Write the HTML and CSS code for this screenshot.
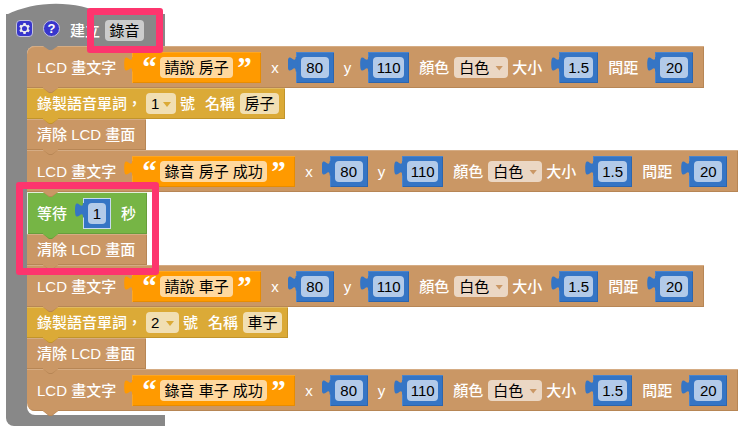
FILE: index.html
```html
<!DOCTYPE html>
<html lang="zh-Hant">
<head>
<meta charset="utf-8">
<title>錄音</title>
<link rel="stylesheet" href="styles.css">
</head>
<body>
<main class="procedure">
  <header class="head">
    <svg class="hat" viewBox="0 0 100 12" aria-hidden="true"><path d="M0 12 c30,-15 70,-15 100,0z"/></svg>
    <button class="icon" type="button" aria-label="設定">
      <svg viewBox="0 0 16 16" aria-hidden="true"><path fill-rule="evenodd" d="m4.203,7.296 0,1.368 -0.92,0.677 -0.11,0.41 0.9,1.559 0.41,0.11 1.043,-0.457 1.187,0.683 0.127,1.134 0.3,0.3 1.8,0 0.3,-0.299 0.127,-1.138 1.185,-0.682 1.046,0.458 0.409,-0.11 0.9,-1.559 -0.11,-0.41 -0.92,-0.677 0,-1.366 0.92,-0.677 0.11,-0.41 -0.9,-1.559 -0.409,-0.109 -1.046,0.458 -1.185,-0.682 -0.127,-1.138 -0.3,-0.299 -1.8,0 -0.3,0.3 -0.126,1.135 -1.187,0.682 -1.043,-0.457 -0.41,0.11 -0.899,1.559 0.108,0.409z"/><circle cx="8" cy="8" r="2.4"/></svg>
    </button>
    <button class="icon round" type="button">?</button>
    <label class="title"><span>建立</span><span class="named"><input class="two" value="錄音"></span></label>
  </header>

  <div class="body">
    <div class="stack">
      <div class="row tall lcd">
        <label class="arg first"><span>LCD 畫文字</span><span class="value text"><b>“</b><input class="short" value="請說 房子"><b>”</b></span></label>
        <label class="arg"><span>x</span><span class="value num"><input class="n2" value="80"></span></label>
        <label class="arg"><span>y</span><span class="value num"><input class="n3" value="110"></span></label>
        <label class="choice"><span>顏色</span><span class="pick"><select class="colour"><option>白色</option></select></span></label>
        <label class="arg near"><span>大小</span><span class="value num"><input class="nd" value="1.5"></span></label>
        <label class="arg"><span>間距</span><span class="value num"><input class="n2" value="20"></span></label>
      </div>
      <div class="row voice">
        <label class="choice slim"><span>錄製語音單詞，</span><span class="pick"><select class="digit"><option>1</option></select></span><span>號</span></label>
        <label class="choice"><span>名稱</span><input class="two" value="房子"></label>
      </div>
      <div class="row lcd">清除 LCD 畫面</div>
      <div class="row tall lcd">
        <label class="arg first"><span>LCD 畫文字</span><span class="value text"><b>“</b><input class="long" value="錄音 房子 成功"><b>”</b></span></label>
        <label class="arg"><span>x</span><span class="value num"><input class="n2" value="80"></span></label>
        <label class="arg"><span>y</span><span class="value num"><input class="n3" value="110"></span></label>
        <label class="choice"><span>顏色</span><span class="pick"><select class="colour"><option>白色</option></select></span></label>
        <label class="arg near"><span>大小</span><span class="value num"><input class="nd" value="1.5"></span></label>
        <label class="arg"><span>間距</span><span class="value num"><input class="n2" value="20"></span></label>
      </div>
      <div class="marked">
        <div class="row tall wait">
          <label class="arg first"><span>等待</span><span class="value num lit"><input class="n1" value="1"></span></label>
          <span>秒</span>
        </div>
        <div class="row lcd">清除 LCD 畫面</div>
      </div>
      <div class="row tall lcd">
        <label class="arg first"><span>LCD 畫文字</span><span class="value text"><b>“</b><input class="short" value="請說 車子"><b>”</b></span></label>
        <label class="arg"><span>x</span><span class="value num"><input class="n2" value="80"></span></label>
        <label class="arg"><span>y</span><span class="value num"><input class="n3" value="110"></span></label>
        <label class="choice"><span>顏色</span><span class="pick"><select class="colour"><option>白色</option></select></span></label>
        <label class="arg near"><span>大小</span><span class="value num"><input class="nd" value="1.5"></span></label>
        <label class="arg"><span>間距</span><span class="value num"><input class="n2" value="20"></span></label>
      </div>
      <div class="row voice">
        <label class="choice slim"><span>錄製語音單詞，</span><span class="pick"><select class="digit wide"><option>2</option></select></span><span>號</span></label>
        <label class="choice"><span>名稱</span><input class="two" value="車子"></label>
      </div>
      <div class="row lcd">清除 LCD 畫面</div>
      <div class="row tall lcd">
        <label class="arg first"><span>LCD 畫文字</span><span class="value text"><b>“</b><input class="long" value="錄音 車子 成功"><b>”</b></span></label>
        <label class="arg"><span>x</span><span class="value num"><input class="n2" value="80"></span></label>
        <label class="arg"><span>y</span><span class="value num"><input class="n3" value="110"></span></label>
        <label class="choice"><span>顏色</span><span class="pick"><select class="colour"><option>白色</option></select></span></label>
        <label class="arg near"><span>大小</span><span class="value num"><input class="nd" value="1.5"></span></label>
        <label class="arg"><span>間距</span><span class="value num"><input class="n2" value="20"></span></label>
      </div>
    </div>
  </div>
  <div class="foot"></div>
</main>
</body>
</html>
```
FILE: styles.css
```css
:root {
  --grey: #888;
  --lcd: #ca9765;
  --pink: #fd356e;
}

* { box-sizing: border-box; }

body {
  margin: 0;
  background: #fff;
  color: #fff;
  font: 500 15px/21px "Liberation Sans", "Noto Sans CJK TC", sans-serif;
  white-space: nowrap;
}

.procedure {
  display: flex;
  flex-direction: column;
  padding: 14px 6px 0;
}

/* Cap of the procedure block */
.head {
  position: relative;
  display: flex;
  align-items: center;
  gap: 10px;
  width: 159px;
  height: 32px;
  padding-left: 10px;
  background: var(--grey);
}

.hat {
  position: absolute;
  left: 0;
  bottom: 100%;
  width: 100px;
  height: 12px;
  margin-bottom: -1px;
  fill: var(--grey);
}

.icon {
  display: flex;
  align-items: center;
  justify-content: center;
  width: 17px;
  height: 17px;
  margin: 0 0 4px;
  padding: 0;
  border: 1px solid #c4c4dc;
  border-radius: 4px;
  background: #3836cc;
  color: #fff;
  font: bold 13px/15px "Liberation Sans", sans-serif;
}

.icon svg {
  flex: none;
  width: 17px;
  height: 17px;
  fill: #eee;
}

.icon circle { fill: #3836cc; }
.icon.round { border-radius: 50%; }

.title {
  display: flex;
  gap: 5px;
}

.named { position: relative; display: flex; }

/* Highlight frames */
.named::after,
.marked::after {
  content: "";
  position: absolute;
  z-index: 3;
  border: 7px solid var(--pink);
  border-radius: 3px;
  pointer-events: none;
}

.named::after { inset: -12px -19px -12px -18px; }

.marked { position: relative; width: max-content; }
.marked::after { inset: -10px -12px -10px -11px; }

/* Statement area */
.body {
  padding: 0 0 0 21px;
  background: linear-gradient(var(--grey), var(--grey)) left / 40px 100% no-repeat;
}

.stack {
  position: relative;
  padding-bottom: 4px;
  border-radius: 8px 0 0 8px;
  background: #fff;
}

.foot {
  width: 159px;
  height: 11px;
  border-radius: 0 0 0 8px;
  background: var(--grey);
}

.row {
  position: relative;
  display: flex;
  align-items: center;
  width: max-content;
  height: 31px;
  padding: 0 11px 0 10px;
  background: var(--fill);
  box-shadow: inset 0 1px var(--light), inset -1px -1px var(--dark);
}

.marked .row { width: auto; }
.row.tall { height: 42px; }
.row.voice { padding-right: 6px; }
.lcd { --fill: var(--lcd); --light: #d5ac84; --dark: #b78655; }
.voice { --fill: #dbaa37; --light: #e2bb5f; --dark: #c1942b; }
.wait { --fill: #76b545; --light: #e3f0da; --dark: #669e3b; }
.wait { box-shadow: inset 1px 1px var(--light), inset -1px -1px var(--dark); }

.stack > .row:first-child { border-top-left-radius: 8px; }
.stack > .row:last-child { border-bottom-left-radius: 8px; }

/* Connector under each statement: edge, then fill */
.row::before,
.row::after,
.stack::before {
  content: "";
  position: absolute;
  z-index: 1;
  left: 16px;
  width: 15px;
  height: 5px;
  clip-path: polygon(0 0, 100% 0, 100% 1px, 9px 100%, 6px 100%, 0 1px);
}

.row::before { top: calc(100% - 1px); height: 6px; background: var(--dark); }
.row::after { top: calc(100% - 1px); background: var(--fill); }
.stack::before { top: -1px; background: var(--grey); }

.arg, .choice { display: flex; align-items: center; }
.arg { gap: 17px; }
.arg.first { gap: 16px; }
.choice { gap: 5px; }
.row > * + * { margin-left: 10px; }
.row > .near { margin-left: 4px; }
.slim { gap: 4px; }

/* Value blocks */
.value {
  position: relative;
  display: flex;
  align-items: center;
  height: 31px;
  padding: 0 5px;
  background: var(--block);
  box-shadow: inset 1px 1px var(--hi), inset -1px -1px var(--lo);
}

.value::before {
  content: "";
  position: absolute;
  top: 5px;
  left: -8px;
  width: 10px;
  height: 15px;
  background: var(--block);
  clip-path: path("M8 0c0 10 -8 -8 -8 7.5s8 -2.5 8 7.5h2V0z");
}

.num { --block: #3575c5; --hi: #4b84cb; --lo: #2c66af; }
.lit { --hi: #c8daef; --lo: #c8daef; }
.text { --block: #ff9a00; --hi: #ffa620; --lo: #e88c00; gap: 4px; padding: 0 10px; }

.text b {
  width: 14px;
  height: 21px;
  font: bold 29px/20px "Liberation Serif", serif;
  text-align: center;
}

/* Editable fields */
input, select {
  appearance: none;
  height: 21px;
  margin: 0;
  padding: 0;
  border: 0;
  border-radius: 4px;
  background: rgba(255, 255, 255, .62);
  color: #000;
  font: 400 15px/21px "Liberation Sans", "Noto Sans CJK TC", sans-serif;
  text-align: center;
}

select { padding-left: 5px; text-align: left; }

.two { width: 39px; }
.title .two { background: #ccc; }
.short { width: 73px; }
.long { width: 107px; }
.n1 { width: 18px; }
.n2 { width: 28px; }
.n3 { width: 31px; }
.nd { width: 29px; }
.colour { width: 54px; }
.digit { width: 30px; }
.digit.wide { width: 33px; }

.pick { position: relative; display: flex; }

.pick::after {
  content: "";
  position: absolute;
  top: 9px;
  right: 5px;
  width: 8px;
  height: 5px;
  background: var(--fill);
  clip-path: polygon(0 0, 100% 0, 50% 100%);
  pointer-events: none;
}
```
